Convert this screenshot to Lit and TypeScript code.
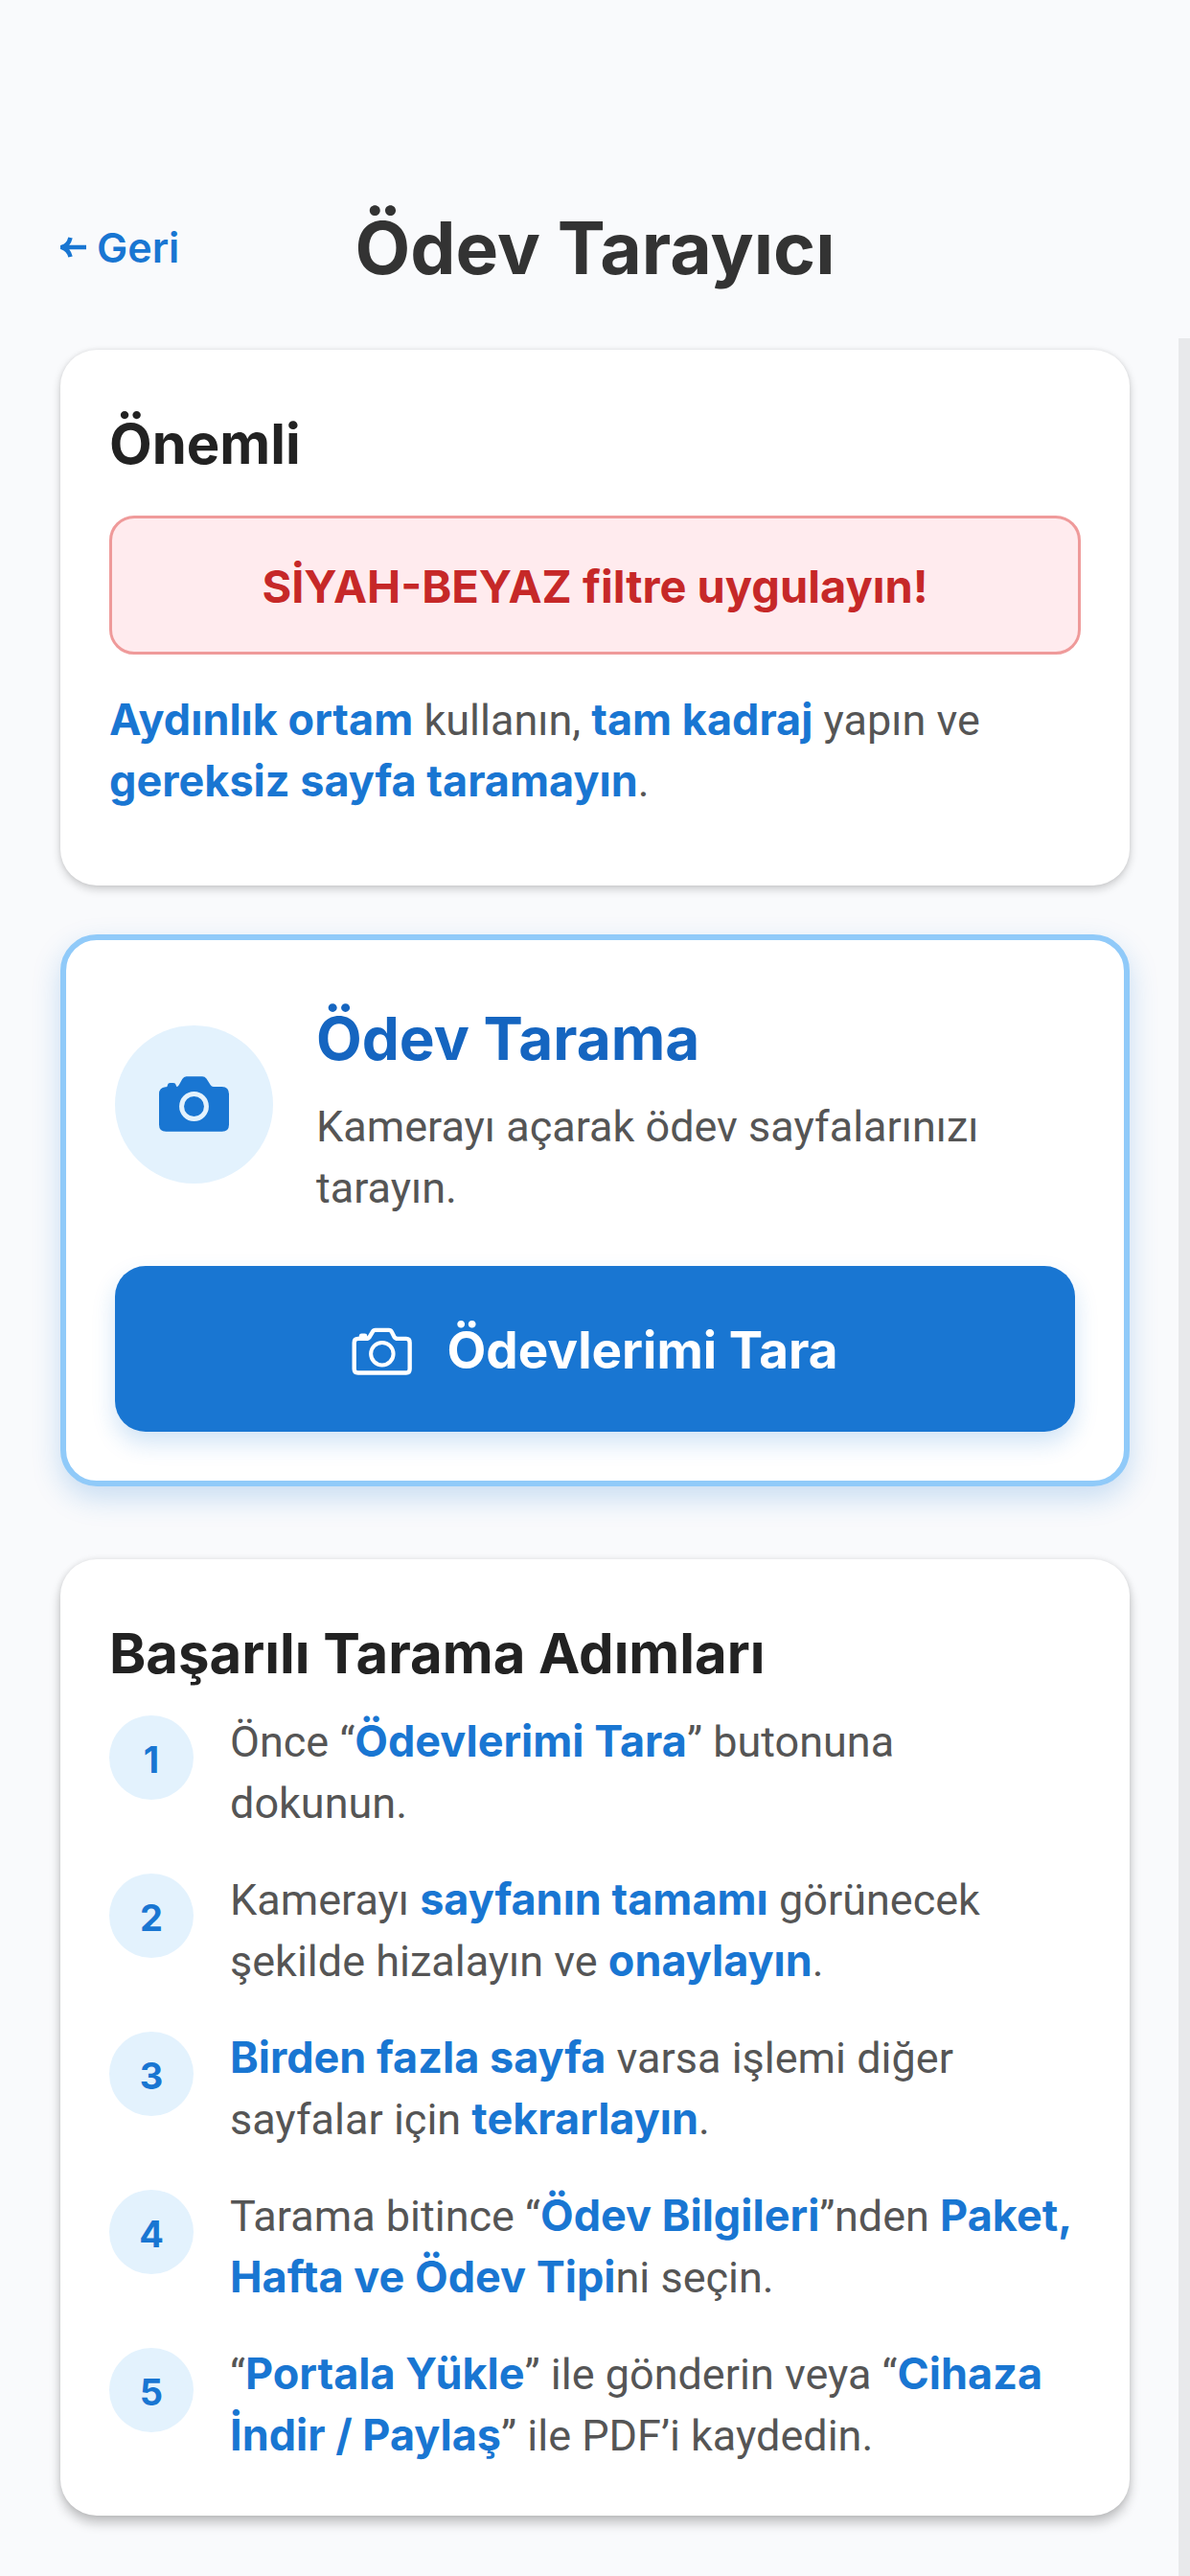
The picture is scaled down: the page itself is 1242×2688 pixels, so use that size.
import { LitElement, html, css, svg } from "lit";
import type { TemplateResult } from "lit";
import { customElement } from "lit/decorators.js";

const arrowIcon = html`<svg class="arrow" viewBox="0 0 27 22" aria-hidden="true">
  ${svg`<path d="M2.5 11H27M10.5 1Q8.5 9 1.5 11Q8.5 13 10.5 21" fill="none" stroke="currentColor" stroke-width="4.6"/>`}
</svg>`;

const cameraFilled = html`<svg class="camera-filled" viewBox="166 217 220 173" aria-hidden="true">
  ${svg`<path fill="currentColor" d="M186 250H189Q193 249 193 243Q194 237 201 237H211Q218 237 219 243Q220 249 223 249Q226 248 229 243L239 225Q244 217 252 217H302Q310 217 315 224L328 244Q331 249 337 249H364Q386 250 386 272V368Q386 390 364 390H188Q166 390 166 368V272Q166 252 186 250Z"/>
  <circle class="lens" cx="276" cy="311" r="39" fill="none" stroke-width="15"/>`}
</svg>`;

const cameraOutline = html`<svg class="camera-outline" viewBox="84 98 188 148" aria-hidden="true">
  ${svg`<path fill="none" stroke="currentColor" stroke-width="13" stroke-linejoin="round" d="M105 133H128Q136 133 140 127L149 112Q152 106 158 106H200Q206 106 209 112L216 126Q220 133 228 133H254Q265 133 265 145V227Q265 239 254 239H104Q92 239 92 227V145Q92 133 104 133Z"/>
  <path fill="currentColor" d="M107 134V124Q108 117 115 117H125Q132 117 133 124V134Z"/>
  <circle cx="179" cy="180" r="35" fill="none" stroke="currentColor" stroke-width="12"/>`}
</svg>`;

const steps: TemplateResult[] = [
  html`Önce “<strong>Ödevlerimi Tara</strong>” butonuna dokunun.`,
  html`Kamerayı <strong>sayfanın tamamı</strong> görünecek şekilde hizalayın ve <strong>onaylayın</strong>.`,
  html`<strong>Birden fazla sayfa</strong> varsa işlemi diğer sayfalar için <strong>tekrarlayın</strong>.`,
  html`Tarama bitince “<strong>Ödev Bilgileri</strong>”nden <strong>Paket, Hafta ve Ödev Tipi</strong>ni seçin.`,
  html`“<strong>Portala Yükle</strong>” ile gönderin veya “<strong>Cihaza İndir / Paylaş</strong>” ile PDF’i kaydedin.`,
];

@customElement("app-root")
export class AppRoot extends LitElement {
  static styles = css`
    :host {
      display: flex;
      flex-direction: column;
      min-height: 100vh;
      background: #f9fafc;
      color: #555;
      font: 400 45px/64px "Roboto", sans-serif;
    }
    * { box-sizing: border-box; }
    h1, h2, h3, p, ol { margin: 0; padding: 0; }
    h1, h2, h3, strong, .back, .alert, .scan, .badge { font-family: "Inter", sans-serif; }

    header {
      display: grid;
      grid-template-columns: 1fr auto 1fr;
      align-items: center;
      padding: 214px 63px 49px;
    }
    .back {
      display: flex;
      align-items: center;
      justify-self: start;
      gap: 11px;
      padding-bottom: 2px;
      color: #1976d2;
      font-size: 43px;
      font-weight: 600;
      line-height: 60px;
      text-decoration: none;
    }
    .arrow { width: 27px; height: 22px; }
    h1 { color: #333; font-size: 75px; font-weight: 700; line-height: 90px; }

    main {
      position: relative;
      flex: 1;
      padding: 12px 63px 63px;
    }
    .scrollbar {
      position: absolute;
      top: 0;
      right: 0;
      bottom: 0;
      width: 12px;
      background: #e8e9eb;
    }
    .card { padding: 51px; border-radius: 38px; background: #fff; }
    .notice { box-shadow: 0 4px 10px rgba(0, 0, 0, 0.18), 0 0 4px rgba(0, 0, 0, 0.08); }
    .steps-card { margin-top: 76px; box-shadow: 0 8px 12px rgba(0, 0, 0, 0.22), 0 0 6px rgba(0, 0, 0, 0.1); }
    h2 { color: #222; font-size: 58px; font-weight: 700; line-height: 94px; }
    strong { color: #1976d2; font-weight: 700; line-height: 60px; }

    .alert {
      margin: 28px 0 37px;
      padding: 40px 39px 38px;
      border: 3px solid #ef9a9a;
      border-radius: 26px;
      background: #ffebee;
      color: #c62828;
      font-size: 47px;
      font-weight: 700;
      line-height: 61px;
      text-align: center;
    }
    .notice p:last-child { margin-bottom: 25px; }

    .action {
      display: grid;
      gap: 49px;
      margin-top: 51px;
      border: 6px solid #90caf9;
      box-shadow: 0 12px 30px rgba(25, 118, 210, 0.22);
    }
    .intro { display: flex; align-items: center; gap: 45px; }
    .circle {
      display: grid;
      flex: none;
      place-items: center;
      width: 165px;
      height: 165px;
      border-radius: 50%;
      background: #e3f2fd;
      color: #1976d2;
    }
    .camera-filled { width: 73px; height: 58px; }
    .lens { stroke: #e3f2fd; }
    h3 { margin-bottom: 9px; color: #1565c0; font-size: 62px; font-weight: 700; line-height: 103px; }
    .scan {
      display: flex;
      align-items: center;
      justify-content: center;
      gap: 36px;
      width: 100%;
      padding: 56px 54px 52px;
      border: 0;
      border-radius: 32px;
      background: #1976d2;
      color: #fff;
      font-size: 53px;
      font-weight: 700;
      line-height: 65px;
      box-shadow: 0 12px 24px rgba(25, 118, 210, 0.2);
    }
    .camera-outline { width: 63px; height: 50px; }

    ol { display: grid; gap: 37px; margin-top: 14px; list-style: none; }
    li { display: flex; align-items: flex-start; gap: 38px; }
    .badge {
      flex: none;
      width: 88px;
      height: 88px;
      margin-top: 4px;
      border-radius: 50%;
      background: #e3f2fd;
      color: #1976d2;
      font-size: 38px;
      font-weight: 700;
      line-height: 92px;
      text-align: center;
    }
  `;

  render() {
    return html`
      <header>
        <a class="back" href="#">${arrowIcon}Geri</a>
        <h1>Ödev Tarayıcı</h1>
      </header>
      <main lang="tr">
        <section class="card notice">
          <h2>Önemli</h2>
          <p class="alert">SİYAH-BEYAZ filtre uygulayın!</p>
          <p><strong>Aydınlık ortam</strong> kullanın, <strong>tam kadraj</strong> yapın ve <strong>gereksiz sayfa taramayın</strong>.</p>
        </section>
        <section class="card action">
          <div class="intro">
            <span class="circle">${cameraFilled}</span>
            <div>
              <h3>Ödev Tarama</h3>
              <p>Kamerayı açarak ödev sayfalarınızı tarayın.</p>
            </div>
          </div>
          <button class="scan" type="button">${cameraOutline}<span>Ödevlerimi Tara</span></button>
        </section>
        <section class="card steps-card">
          <h2>Başarılı Tarama Adımları</h2>
          <ol>
            ${steps.map((step, i) => html`<li><span class="badge">${i + 1}</span><p>${step}</p></li>`)}
          </ol>
        </section>
        <div class="scrollbar"></div>
      </main>
    `;
  }
}
